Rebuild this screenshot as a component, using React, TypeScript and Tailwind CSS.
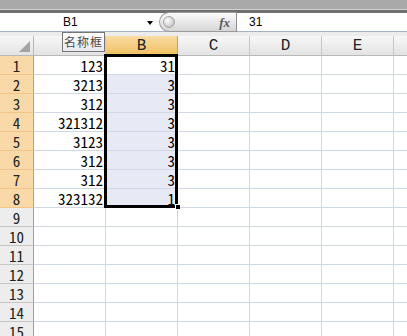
import React from "react";

const data: [string, string][] = [
  ["123", "31"],
  ["3213", "3"],
  ["312", "3"],
  ["321312", "3"],
  ["3123", "3"],
  ["312", "3"],
  ["312", "3"],
  ["323132", "1"],
];

const cols = ["A", "B", "C", "D", "E", "F"];

export default function App() {
  const rows = Array.from({ length: 15 }, (_, i) => i + 1);
  return (
    <div className="relative w-[407px] h-[336px] overflow-hidden bg-white font-['Noto_Sans_Mono_CJK_SC','DejaVu_Sans_Mono',monospace] text-black">
      {/* top gray bar */}
      <div className="h-[9px] bg-[#a9a9a9]" />
      <div className="h-px bg-[#d2d2d2]" />
      <div className="h-[3px] bg-[#6f6f6f]" />
      {/* formula bar */}
      <div className="flex h-[18px] bg-white">
        <div className="relative flex w-[159px] items-center">
          <span className="ml-[63px] font-['Liberation_Sans',sans-serif] text-[12px] leading-none">B1</span>
          <span className="absolute left-[147px] top-[8px] h-0 w-0 border-x-[3px] border-t-[4px] border-x-transparent border-t-black" />
        </div>
        <div className="relative -mt-px flex h-[20px] w-[77px] items-center justify-end rounded-l-full border border-r-0 border-[#9b9b9b] bg-linear-to-b from-[#fbfbfb] via-[#e9e9e9] to-[#d6d6d6]">
          <span className="absolute left-[3px] top-[3px] h-[12px] w-[12px] rounded-full border border-[#a5a5a5] bg-[radial-gradient(circle_at_35%_35%,#ffffff,#c9c9c9_70%,#a8a8a8)]" />
          <span className="mr-[6px] font-['Liberation_Serif',serif] text-[13px] font-bold italic leading-none text-[#5a5a5a]">fx</span>
        </div>
        <div className="-mt-px h-[20px] w-px bg-[#8e8e8e]" />
        <div className="flex flex-1 items-center pl-[12px]">
          <span className="font-['Liberation_Sans',sans-serif] text-[12px] leading-none">31</span>
        </div>
      </div>
      <div className="h-px bg-[#a7b3c4]" />
      <div className="h-[4px] bg-[#ececec]" />
      {/* column headers */}
      <div className="flex h-[20px] border-b border-[#b8b8b8]">
        <div className="relative w-[34px] shrink-0 border-r border-[#b8b8b8] bg-linear-to-b from-[#f7f7f7] to-[#e3e3e3]">
          <svg className="absolute right-[3px] bottom-[3px]" width="11" height="11" viewBox="0 0 11 11">
            <polygon points="11,0 11,11 0,11" fill="#a4a4a4" />
          </svg>
        </div>
        {cols.map((c) => (
          <div
            key={c}
            className={
              c === "B"
                ? "w-[72px] shrink-0 border-r border-[#f29436] bg-linear-to-b from-[#f9dba4] to-[#f1c15f] text-center font-['Liberation_Mono',monospace] text-[16px] leading-[20px] text-[#222]"
                : "w-[72px] shrink-0 border-r border-[#c8c8c8] bg-linear-to-b from-[#f7f7f7] to-[#e3e3e3] text-center font-['Liberation_Mono',monospace] text-[16px] leading-[20px] text-[#222]"
            }
          >
            {c}
          </div>
        ))}
      </div>
      {/* rows */}
      {rows.map((r) => {
        const d = data[r - 1];
        const sel = r <= 8;
        return (
          <div key={r} className="flex h-[19px]">
            <div
              className={
                sel
                  ? "flex w-[34px] shrink-0 items-end justify-center border-r border-b border-r-[#f29436] border-b-[#f2c48a] bg-[#f9d9a7] text-[15px] leading-none text-[#222]"
                  : "flex w-[34px] shrink-0 items-end justify-center border-r border-b border-r-[#9e9e9e] border-b-[#c6c6c6] bg-[#ededed] text-[15px] leading-none text-[#222]"
              }
            >
              <span className="mb-[1px]">{r}</span>
            </div>
            {cols.map((c) => {
              let text = "";
              if (d && c === "A") text = d[0];
              if (d && c === "B") text = d[1];
              const fill = c === "B" && r >= 2 && r <= 8;
              return (
                <div
                  key={c}
                  className={
                    fill
                      ? "flex w-[72px] shrink-0 items-end justify-end border-r border-b border-[#d0d7e5] bg-[#e7e9f4] pr-[2px] text-[15px] leading-none"
                      : "flex w-[72px] shrink-0 items-end justify-end border-r border-b border-[#d0d7e5] bg-white pr-[2px] text-[15px] leading-none"
                  }
                >
                  <span className="mb-[1px]">{text}</span>
                </div>
              );
            })}
          </div>
        );
      })}
      {/* selection border */}
      <div className="absolute left-[104px] top-[54px] h-[154px] w-[74px] border-[3px] border-black" />
      <div className="absolute left-[175px] top-[204px] h-[6px] w-[6px] border border-white bg-black" />
      {/* tooltip */}
      <div className="absolute left-[62px] top-[32px] flex h-[20px] w-[43px] items-center justify-center border border-[#767676] bg-linear-to-b from-white to-[#e8e9f1] font-['Noto_Sans_CJK_SC',sans-serif] text-[12px] leading-none tracking-[1px] text-[#4a4a4a]">
        名称框
      </div>
    </div>
  );
}
